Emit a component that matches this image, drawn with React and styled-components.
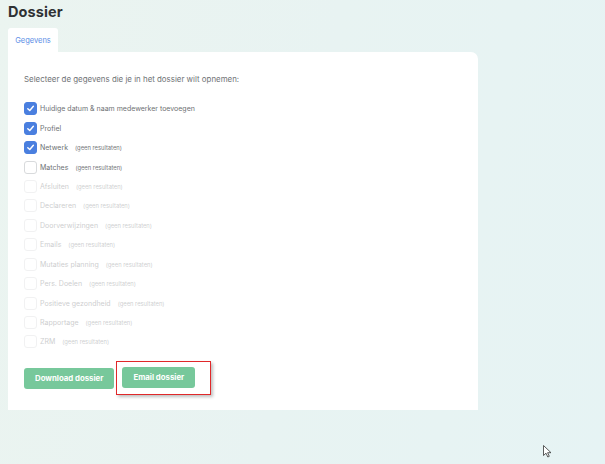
import React, { useState } from "react";
import styled, { createGlobalStyle } from "styled-components";

const GlobalStyle = createGlobalStyle`
  html, body {
    margin: 0;
    padding: 0;
  }
  body {
    width: 605px;
    height: 464px;
    overflow: hidden;
    font-family: Inter, "Open Sans", sans-serif;
    background: linear-gradient(100deg, #ebf4f0 0%, #e8f3f2 50%, #e6f3f4 100%);
  }
`;

const Page = styled.div`
  padding: 3px 0 0 8px;
  width: 470px;
`;

const Title = styled.h1`
  margin: 0;
  font-size: 14.5px;
  font-weight: 700;
  color: #2f3133;
  line-height: 18px;
  letter-spacing: 0.1px;
`;

const Tabs = styled.div`
  display: flex;
  margin-top: 7px;
`;

const Tab = styled.div`
  height: 24px;
  width: 50px;
  background: ${(p) => (p.active ? "#ffffff" : "transparent")};
  border-radius: 3px 3px 0 0;
  display: flex;
  align-items: center;
  justify-content: center;
  font-size: 7.5px;
  color: #5b8ee6;
`;

const Card = styled.div`
  background: #ffffff;
  border-radius: 0 7px 0 0;
  padding: 21px 16px 20px 16px;
  height: 317px;
`;

const Intro = styled.p`
  margin: 0 0 14px 0;
  font-size: 7.9px;
  color: #707376;
  line-height: 12px;
`;

const List = styled.div`
  display: flex;
  flex-direction: column;
`;

const Row = styled.label`
  display: flex;
  align-items: center;
  height: 19.45px;
  gap: 3px;
  opacity: ${(p) => (p.faded ? 0.35 : 1)};
`;

const Box = styled.span`
  width: 11px;
  height: 11px;
  border-radius: 3px;
  flex-shrink: 0;
  display: flex;
  align-items: center;
  justify-content: center;
  background: ${(p) => (p.checked ? "#4a7fdf" : "#ffffff")};
  border: 1px solid ${(p) => (p.checked ? "#4a7fdf" : "#d8dadc")};
`;

const Label = styled.span`
  font-size: 7px;
  color: #6e7174;
`;

const Note = styled.span`
  font-size: 5.8px;
  color: #74777a;
  margin-left: 4px;
`;

const Actions = styled.div`
  display: flex;
  gap: 9px;
  margin-top: 16px;
`;

const Highlight = styled.div`
  display: flex;
  margin: -7px -17px -6px -7px;
  padding: 5px 15px 4px 5px;
  border: 1.5px solid #e0282a;
  box-shadow: 2px 2px 3px rgba(0, 0, 0, 0.25);
`;

const Button = styled.button`
  height: 21px;
  padding: 0 11px;
  border: none;
  border-radius: 3px;
  background: #77c89b;
  color: #ffffff;
  font-family: inherit;
  font-size: 7.8px;
  font-weight: 700;
  cursor: pointer;
`;

const Cursor = styled.svg`
  position: absolute;
  left: 543px;
  top: 445px;
`;

const items = [
  { label: "Huidige datum & naam medewerker toevoegen", checked: true },
  { label: "Profiel", checked: true },
  { label: "Netwerk", checked: true, note: true },
  { label: "Matches", note: true },
  { label: "Afsluiten", note: true, faded: true },
  { label: "Declareren", note: true, faded: true },
  { label: "Doorverwijzingen", note: true, faded: true },
  { label: "Emails", note: true, faded: true },
  { label: "Mutaties planning", note: true, faded: true },
  { label: "Pers. Doelen", note: true, faded: true },
  { label: "Positieve gezondheid", note: true, faded: true },
  { label: "Rapportage", note: true, faded: true },
  { label: "ZRM", note: true, faded: true },
];

const Check = () => (
  <svg width="9" height="9" viewBox="0 0 10 10">
    <path d="M2 5.2 L4.2 7.3 L8.2 2.6" fill="none" stroke="#fff" strokeWidth="1.6" strokeLinecap="round" strokeLinejoin="round" />
  </svg>
);

export default function App() {
  const [state, setState] = useState(items.map((i) => !!i.checked));

  return (
    <>
      <GlobalStyle />
      <Page>
        <Title>Dossier</Title>
        <Tabs>
          <Tab active>Gegevens</Tab>
        </Tabs>
        <Card>
          <Intro>Selecteer de gegevens die je in het dossier wilt opnemen:</Intro>
          <List>
            {items.map((item, i) => (
              <Row
                key={item.label}
                faded={item.faded}
                onClick={() => setState(state.map((v, j) => (j === i ? !v : v)))}
              >
                <Box checked={state[i]}>{state[i] && <Check />}</Box>
                <Label>{item.label}</Label>
                {item.note && <Note>(geen resultaten)</Note>}
              </Row>
            ))}
          </List>
          <Actions>
            <Button>Download dossier</Button>
            <Highlight>
              <Button>Email dossier</Button>
            </Highlight>
          </Actions>
        </Card>
      </Page>
      <Cursor width="9" height="13" viewBox="0 0 9 13">
        <path d="M0.5 0.5 L0.5 10.5 L3 8.2 L4.8 12 L6.3 11.3 L4.6 7.7 L8 7.7 Z" fill="#fff" stroke="#333" strokeWidth="0.8" />
      </Cursor>
    </>
  );
}
